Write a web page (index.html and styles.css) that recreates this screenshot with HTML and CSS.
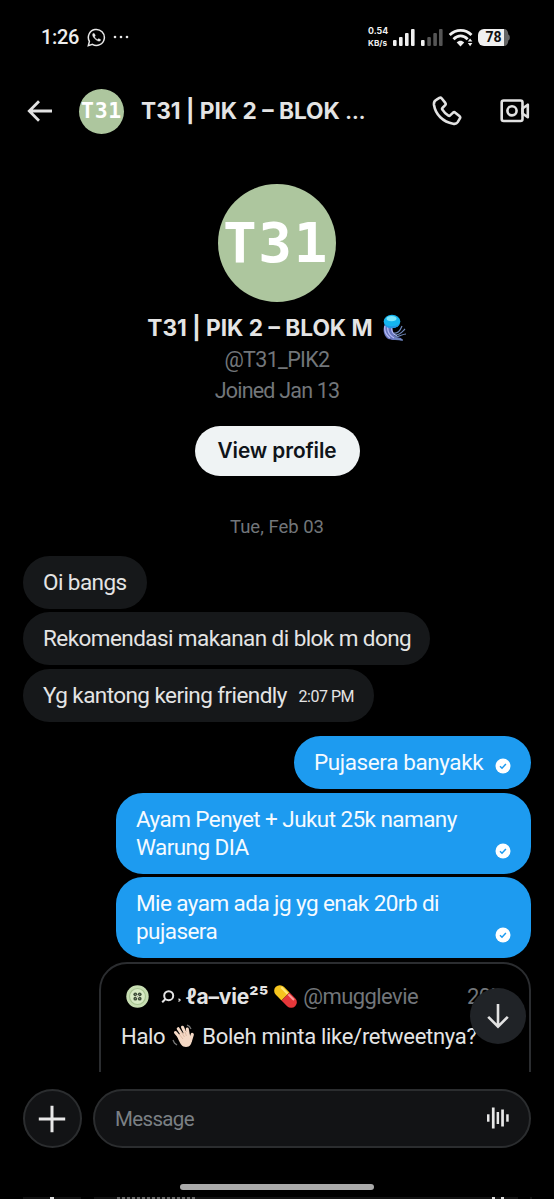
FILE: index.html
```html
<!DOCTYPE html>
<html lang="id">
<head>
<meta charset="utf-8">
<title>Messages</title>
<link rel="stylesheet" href="styles.css">
</head>
<body>
<div class="screen">
  <div class="status">
    <span class="clock">1:26</span>
    <svg class="wa" width="19" height="19" viewBox="0 0 19 19" fill="none" stroke="#e8e8e8" stroke-width="1.5"><path d="M1.3 17.6l1.1-4.2a8 8 0 1 1 3 3z"/><path d="M6.2 5.2c-1.4 1.2-.6 3.4 1.6 5.6s4.600 3.200 5.700 1.700l.1-.9-2-1-1 1c-1.300-.5-2.500-1.700-3-2.900l.8-.9-.8-2z" fill="#e8e8e8" stroke-width=".3"/></svg>
    <svg class="more" width="16" height="4" viewBox="0 0 16 4" fill="#e8e8e8"><circle cx="2" cy="2" r="1.300"/><circle cx="8" cy="2" r="1.300"/><circle cx="14" cy="2" r="1.300"/></svg>
    <div class="speed"><span>0.54</span><span class="unit">KB/s</span></div>
    <svg class="radio" width="118" height="20" viewBox="0 0 118 20">
      <g fill="#f0f0f0"><rect x="0" y="12" width="3.600" height="6" rx="1"/><rect x="6" y="9" width="3.600" height="9" rx="1"/><rect x="12" y="5" width="3.600" height="13" rx="1"/><rect x="18" y="1" width="3.600" height="17" rx="1"/><rect x="28" y="12" width="3.600" height="6" rx="1"/></g>
      <g fill="#555"><rect x="34.300" y="9" width="3.600" height="9" rx="1"/><rect x="40.300" y="5" width="3.600" height="13" rx="1"/><rect x="46" y="1" width="3.600" height="17" rx="1"/></g>
      <g fill="none" stroke="#f0f0f0" stroke-width="2.800"><path d="M56.700 7C63 .8 72.500.8 78.500 7"/><path d="M60.500 11.200c4.400-4.400 9.800-4.400 14.200 0"/></g>
      <path d="M63.700 14.500c2.300-2.300 5.200-2.300 7.500 0L67.500 18.400z" fill="#f0f0f0"/>
      <path d="M74.800 13.600l2.300-3.200 2.300 3.200zM74.800 15l2.300 3.200L79.400 15z" fill="#f0f0f0"/>
      <path d="M110 1c4 0 5 2 5.300 5.500 2 .5 2 5.500 0 6C115 16 114 18 110 18z" fill="#666"/>
      <path d="M91 1h20v17H91a6 6 0 0 1-6-6V7a6 6 0 0 1 6-6z" fill="#f0f0f0"/>
      <text class="battery" x="100.500" y="14.300" text-anchor="middle">78</text>
    </svg>
  </div>

  <header class="header">
    <svg class="back" width="26" height="24" viewBox="0 0 26 24" fill="none" stroke="#e2e2e2" stroke-width="2.800"><path d="M25 12H3M12 2.300L2.300 12l9.700 9.700"/></svg>
    <div class="avatar avatar-small"><span>T31</span></div>
    <div class="title">T31 | PIK 2 – BLOK <span class="dots">...</span></div>
    <svg class="call" width="30" height="31" viewBox="0 0 30 31" fill="none" stroke="#e2e2e2" stroke-width="2.600" stroke-linejoin="round"><path d="M4.200 3.900L7.400 1.900c.9-.5 1.600-.3 2.200.4l3.700 4.600c.6.900.6 1.600-.1 2.300L10.400 12c-.5.6-.5 1 0 1.700 1.500 2.500 3.500 4.500 6 5.900.7.400 1.200.3 1.700-.2l3-2.800c.8-.6 1.500-.5 2.200.1l4.400 3.600c.6.600.7 1.300.2 2.100l-2.200 3.700c-1 1.600-2.700 2-4.600 1.600C11 26 3.500 18.500 2 9c-.3-2.300.4-4.100 2.200-5.100z"/></svg>
    <svg class="video" width="30" height="24" viewBox="0 0 30 24" fill="none" stroke="#e2e2e2" stroke-width="2.600" stroke-linejoin="round"><rect x="1.700" y="1.500" width="20.800" height="20.500" rx="2"/><circle cx="12" cy="11.800" r="4.600"/><path d="M22.500 9.500l5.300-3.800v12.600l-5.300-3.800z"/></svg>
  </header>

  <main class="thread">
    <section class="profile">
      <div class="avatar avatar-large"><span>T31</span></div>
      <div class="name"><span class="name-text">T31 | PIK 2 – BLOK M</span>
        <svg width="24" height="28" viewBox="0 0 24 28"><path d="M2 10c-2 4-2 9 1 13 2 3 6 3 9 3l8 .5-2-2.500-5-1c-4-4-4-9-4-13z" fill="#6674bd"/><path d="M2 12c-1 5 1 9 5 12M5 12c-1 5 1 9 6 12M9 12c-1 4 1 8 5 10" fill="none" stroke="#b4baf5" stroke-width="1.300"/><path d="M11 19c4 1 6-2 8-7M12 21c5 0 7-3 10-6M12 23c4 0 7-3 11-3M11 24c3 1 6 2 9 2" fill="none" stroke="#6f88ba" stroke-width="1.200"/><ellipse cx="9" cy="7.500" rx="8.300" ry="6.800" fill="#14b5ef"/><path d="M1.500 10c4 3 10 3 15 0-1 5-14 6-15 0z" fill="#2295e2"/><ellipse cx="8.500" cy="4.600" rx="5" ry="2.600" fill="#7ae6fb"/></svg>
      </div>
      <div class="handle">@T31_PIK2</div>
      <div class="joined">Joined Jan 13</div>
      <div class="view">View profile</div>
    </section>
    <div class="date">Tue, Feb 03</div>
    <div class="bubble in b1"><span class="m1">Oi bangs</span></div>
    <div class="bubble in b2"><span class="m2">Rekomendasi makanan di blok m dong</span></div>
    <div class="bubble in b3"><span class="m3">Yg kantong kering friendly</span><span class="time">2:07 PM</span></div>
    <div class="bubble out first"><span class="m4">Pujasera banyakk</span><svg class="tick" width="16" height="16" viewBox="0 0 16 16"><circle cx="8" cy="8" r="7.500" fill="#fff"/><path d="M5 8.200l2 2 3.900-4.200" fill="none" stroke="#1d9bf0" stroke-width="1.500"/></svg></div>
    <div class="bubble out wide"><span class="m5">Ayam Penyet + Jukut 25k namany<br>Warung DIA</span><svg class="tick" width="16" height="16" viewBox="0 0 16 16"><circle cx="8" cy="8" r="7.500" fill="#fff"/><path d="M5 8.200l2 2 3.900-4.200" fill="none" stroke="#1d9bf0" stroke-width="1.500"/></svg></div>
    <div class="bubble out wide"><span class="m6">Mie ayam ada jg yg enak 20rb di<br>pujasera</span><svg class="tick" width="16" height="16" viewBox="0 0 16 16"><circle cx="8" cy="8" r="7.500" fill="#fff"/><path d="M5 8.200l2 2 3.900-4.200" fill="none" stroke="#1d9bf0" stroke-width="1.500"/></svg></div>
    <article class="card">
      <div class="author">
        <svg class="button-pic" width="23" height="23" viewBox="0 0 23 23"><circle cx="11.500" cy="11.500" r="11.200" fill="#c7deb2"/><circle cx="11.500" cy="11.500" r="8" fill="#d8ebc5" stroke="#a7c391" stroke-width="1.200"/><g fill="#41513c"><circle cx="9.300" cy="9.300" r="1.900"/><circle cx="13.700" cy="9.300" r="1.900"/><circle cx="9.300" cy="13.700" r="1.900"/><circle cx="13.700" cy="13.700" r="1.900"/></g><path d="M9.300 9.300l4.400 4.400M13.700 9.300l-4.400 4.400" stroke="#999b90"/></svg>
        <svg class="mark" width="21" height="14" viewBox="0 0 21 14" fill="none" stroke="#e4e4e4" stroke-width="2"><circle cx="7.700" cy="5.700" r="4.500"/><path d="M4.500 9L1.200 12.300"/><path d="M17.500 8.700l1.600 1.300-1.600 1.400" stroke-width="1.300"/></svg>
        <span class="author-name">ℓa–vie²⁵</span>
        <svg class="pill" width="25" height="25" viewBox="0 0 25 25"><g transform="rotate(45 12.500 12.500)"><path d="M12.500 6.800H4.500a5.700 5.700 0 0 0 0 11.400h8z" fill="#f6c51e"/><path d="M12.500 6.800h8a5.700 5.700 0 0 1 0 11.400h-8z" fill="#e5373a"/><path d="M3 9h9" stroke="#ffe878" stroke-width="2"/><path d="M13 9h8" stroke="#ff9a98" stroke-width="2"/></g></svg>
        <span class="author-handle">@mugglevie</span>
        <span class="ago">20h</span>
      </div>
      <div class="quote"><span class="halo">Halo</span>
        <svg width="23" height="25" viewBox="0 0 23 25"><g stroke="#f5d9c5" stroke-linecap="round" fill="none"><path d="M9 15L3.500 8.500M11 12L6.200 4.700M14 11L10.500 3.200M16.500 12L15.300 5" stroke-width="3"/><path d="M18.500 16.500l1.800-6" stroke-width="3.200"/></g><path d="M5 12l5-3 7 1 3 4c0 6-2 9-6 9-4 0-6-3-9-11z" fill="#f5d9c5"/><path d="M7 10l4 5M9.500 8l3 5M13 8l1.500 4" stroke="#d5ad95" stroke-width=".7"/><path d="M15 1l2.500 1.500L19 5M1 16l1.500 3L5 21" fill="none" stroke="#777" stroke-width="1.300"/></svg>
        <span class="boleh">Boleh minta like/retweetnya?</span></div>
      <div class="jump"><svg width="24" height="26" viewBox="0 0 24 26" fill="none" stroke="#e2e2e2" stroke-width="2.600"><path d="M12 1v22M2.200 13.800l9.800 9.800 9.800-9.800"/></svg></div>
    </article>
  </main>

  <footer class="composer">
    <div class="add"><svg width="28" height="28" viewBox="0 0 28 28" stroke="#e8e8e8" stroke-width="3"><path d="M14 .8v26.400M.8 14h26.400"/></svg></div>
    <div class="input"><span>Message</span><svg width="22" height="22" viewBox="0 0 22 22" fill="#e8e8e8"><rect x="0" y="7.300" width="2.500" height="7.400"/><rect x="4.900" y=".5" width="2.700" height="21"/><rect x="9.600" y="5" width="2.500" height="12"/><rect x="14.200" y="2.500" width="2.700" height="17"/><rect x="19.200" y="7.300" width="2.500" height="7.400"/></svg></div>
  </footer>
  <div class="home"></div>
  <svg class="edge" width="554" height="3" viewBox="0 0 554 3"><path d="M23 2h58M94 2h424M530 2h2" stroke="#262626"/><path d="M50 2h4M492 2h3M501 2h3" stroke="#ddd" stroke-width="2"/><path d="M117 2h78" stroke="#888" stroke-width="1.500" stroke-dasharray="3 2"/></svg>
</div>
</body>
</html>
```
FILE: styles.css
```css
* { box-sizing: border-box; }
body { margin: 0; background: #000; font-family: Roboto, "Noto Sans", sans-serif; color: #e4e4e4; }
svg { display: block; flex: none; }
.screen { width: 554px; height: 1199px; display: flex; flex-direction: column; overflow: hidden; background: #000; }
.status { height: 74px; display: flex; align-items: center; padding: 0 43px 0 41px; flex: none; }
.clock { font: 500 20px/24px Roboto, sans-serif; letter-spacing: -.3px; width: 46px; color: #eee; }
.more { margin-left: 7px; }
.speed { margin-left: auto; display: flex; flex-direction: column; font: 700 8.800px/12px Inter, sans-serif; color: #eee; width: 25px; margin-top: -1px; }
.unit { font-size: 8.200px; }
.radio { margin-top: 1px; }
.battery { font: 700 14px Roboto, sans-serif; fill: #111; }
.header { height: 74px; display: flex; align-items: center; padding: 0 24px 0 27px; flex: none; }
.avatar { border-radius: 50%; background: #adc69e; color: #fff; display: flex; align-items: center; justify-content: center; font-family: "DejaVu Sans Mono", monospace; font-weight: 700; flex: none; }
.avatar-small { width: 45px; height: 45px; margin-left: 26px; font-size: 21.500px; letter-spacing: .7px; line-height: 24px; }
.avatar-large { width: 118px; height: 118px; font-size: 56px; letter-spacing: 1.700px; line-height: 60px; padding-right: 2px; }
.title { font: 700 22.700px/30px Inter, sans-serif; margin-left: 17px; width: 292px; white-space: nowrap; }
.dots { font-size: 20px; }
.video { margin-left: 38px; }
.thread { height: 924px; flex: none; overflow: hidden; display: flex; flex-direction: column; align-items: flex-start; padding: 36px 23px 0; gap: 3.400px; }
.profile { align-self: stretch; display: flex; flex-direction: column; align-items: center; }
.name { display: flex; align-items: center; gap: 10px; font: 700 22.700px/30px Inter, sans-serif; margin-top: 11px; }
.handle, .joined { font-size: 21.500px; line-height: 31px; color: #72767a; letter-spacing: -.65px; }
.joined { letter-spacing: -.8px; }
.handle { margin-top: 1px; }
.view { width: 165px; height: 50px; border-radius: 25px; background: #eff3f4; color: #0f1419; font: 600 20.800px/30px Inter, sans-serif; letter-spacing: -.1px; display: flex; align-items: center; justify-content: center; margin-top: 20px; }
.date { align-self: center; font-size: 18.500px; line-height: 24px; color: #72767a; margin: 35.500px 0 13.700px; }
.bubble { min-height: 53px; border-radius: 27px; padding: 12px 20px; font-size: 22.500px; line-height: 28px; letter-spacing: -.57px; display: flex; white-space: nowrap; flex: none; }
.in { background: #16181a; }
.b1 { width: 124px; }
.b2 { width: 407px; }
.b3 { width: 351px; justify-content: space-between; }
.out { background: #1d9bf0; color: #f5faff; align-self: flex-end; justify-content: space-between; }
.first { margin-top: 11px; width: 237px; letter-spacing: -.4px; }
.wide { width: 415px; height: 81px; }
.time { font-size: 16px; letter-spacing: -.5px; margin: 3px 0 0; line-height: 26px; }
.tick { align-self: flex-end; margin-bottom: 3px; }
.card { position: relative; align-self: flex-end; width: 432px; height: 160px; flex: none; border: 2px solid #2b2d30; border-radius: 28px; padding: 18px 20px; margin-top: .5px; }
.author { display: flex; align-items: center; height: 30px; white-space: nowrap; }
.button-pic { margin-left: 5px; }
.mark { margin: 1px 4px 0 12px; }
.author-name { font: 700 21px/30px Inter, sans-serif; letter-spacing: -.2px; }
.pill { margin: 0 5px; }
.author-handle, .ago { font-size: 22px; letter-spacing: -.55px; color: #72767a; }
.ago { position: absolute; left: 366px; }
.quote { display: flex; align-items: center; gap: 7px; margin-top: 10px; height: 30px; font-size: 22px; letter-spacing: -.3px; white-space: nowrap; }
.jump { position: absolute; left: 369px; top: 24px; width: 56px; height: 56px; border-radius: 50%; background: #202327; display: flex; align-items: center; justify-content: center; }
.composer { height: 94px; flex: none; display: flex; gap: 11px; padding: 17px 23px 0; }
.add { width: 59px; height: 59px; border: 2px solid #2b2d2f; border-radius: 50%; background: #121315; display: flex; align-items: center; justify-content: center; padding-right: 1px; }
.input { flex: 1; height: 59px; border: 2px solid #2b2d2f; border-radius: 30px; background: #121315; display: flex; align-items: center; justify-content: space-between; padding: 0 20px; font: 400 20.500px/30px Roboto, sans-serif; letter-spacing: -.65px; color: #7b8084; }
.input svg { margin-top: -2px; }
.home { width: 194px; height: 6px; border-radius: 3px; background: #aaa; align-self: center; margin-top: 18px; flex: none; }
.edge { margin-top: 6px; }
```
